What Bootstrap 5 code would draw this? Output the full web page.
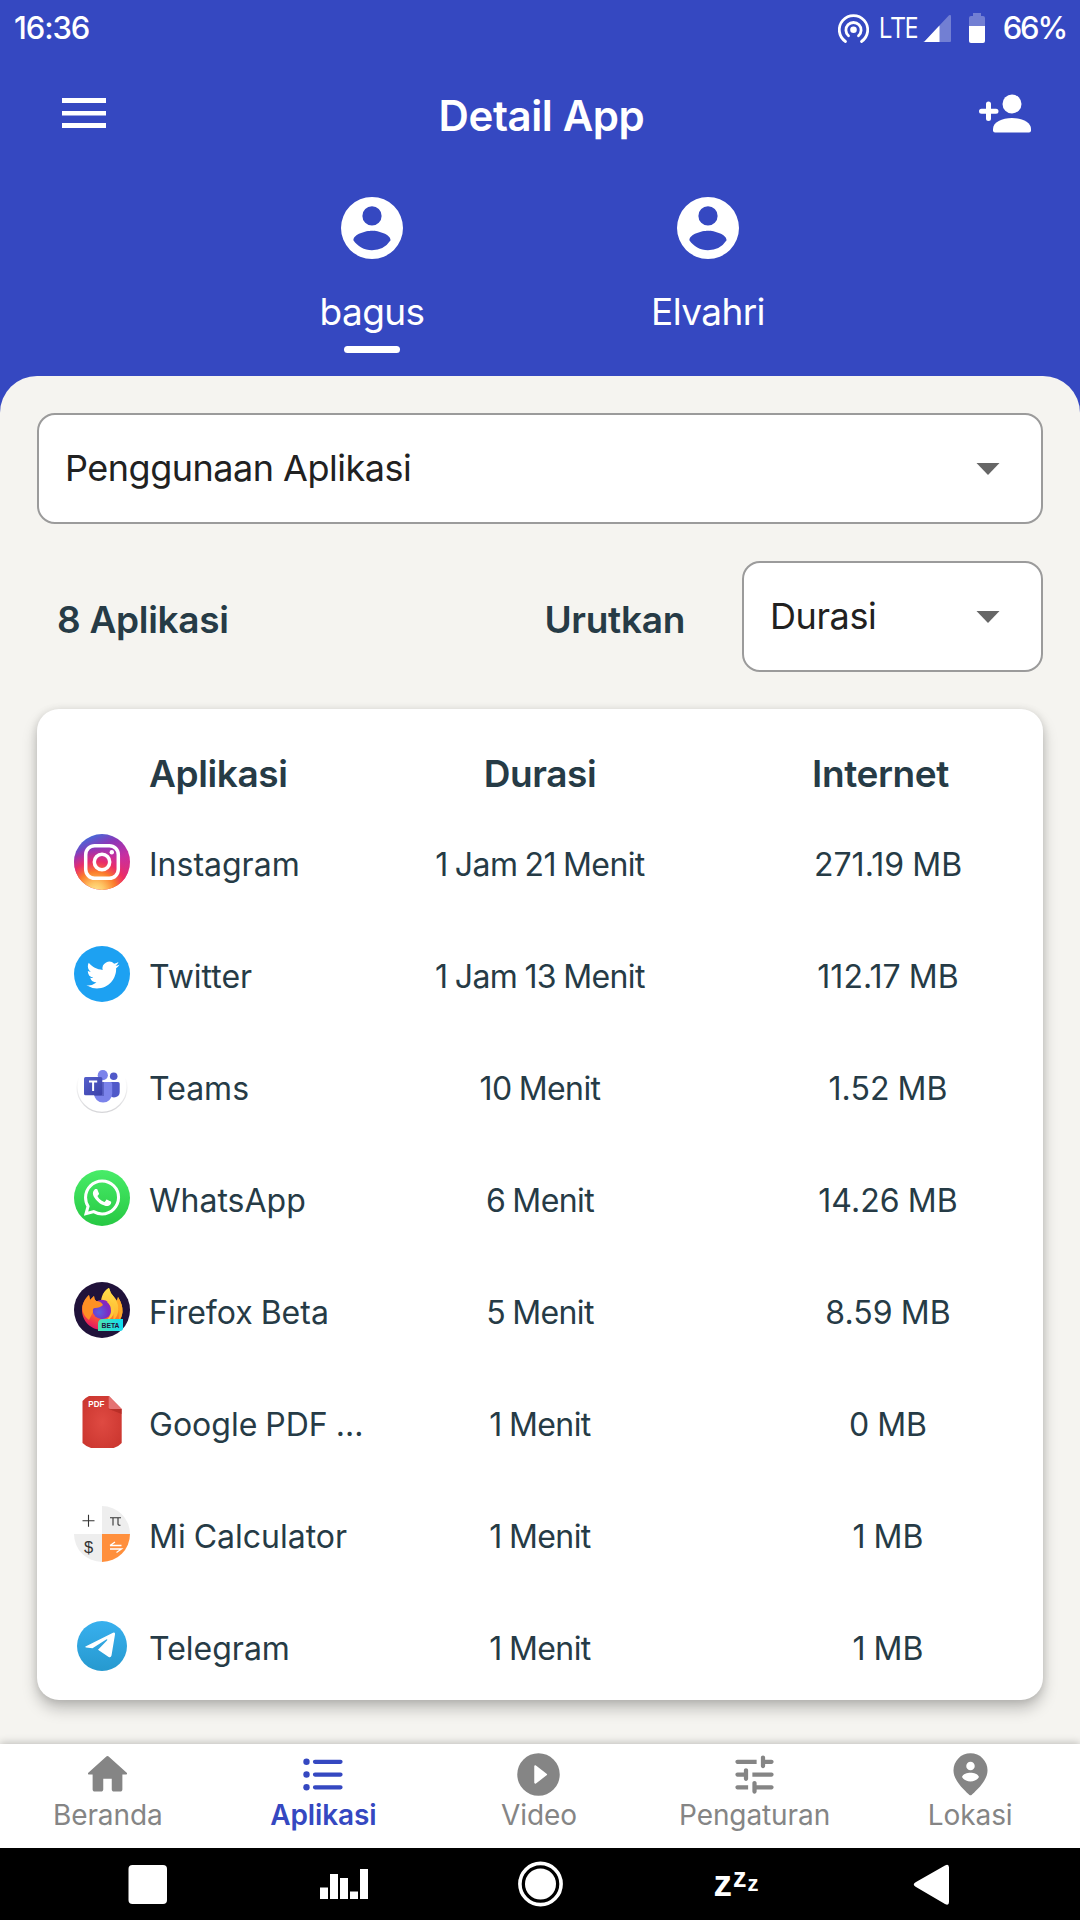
<!DOCTYPE html>
<html lang="id">
<head>
<meta charset="utf-8">
<meta name="viewport" content="width=device-width, initial-scale=1">
<title>Detail App</title>
<link href="https://cdn.jsdelivr.net/npm/bootstrap@5.3.0/dist/css/bootstrap.min.css" rel="stylesheet">
<style>
  :root { --brand: #3548c1; --ink: #263b46; --paper: #f5f4f0; --muted: #858585; }
  html, body { height: 100%; }
  body { background: var(--brand); color: var(--ink); font-family: Inter, "Open Sans", sans-serif; overflow: hidden; }
  svg { display: block; flex: none; }
  .screen { width: 1080px; height: 1920px; }
  .status-bar { height: 57px; padding: 0 14px 0 14px; font-size: 31px; font-weight: 500; letter-spacing: -1.1px; line-height: 56px; }
  .battery-text { margin-left: 12px; letter-spacing: -2.2px; }
  .app-bar { height: 115px; padding: 0 48px 0 62px; }
  .app-title { font-size: 42px; font-weight: 600; letter-spacing: -.4px; line-height: 50px; padding: 3px 4px 0 0; }
  .tabs { height: 204px; padding-top: 25px; }
  .tab { width: 336px; color: #fff; font-size: 37px; line-height: 44px; letter-spacing: -.6px; }
  .tab-name { margin-top: 31px; }
  .tab-bar { width: 56px; height: 7px; border-radius: 4px; background: #fff; margin-top: 12px; }
  .sheet { height: 1368px; background: var(--paper); border-radius: 37px 37px 0 0; padding: 37px 37px 0; }
  .picker { height: 111px; border: 2px solid #9b9b9b; border-radius: 18px; background: #fff; color: #212121; font-size: 36px; letter-spacing: -.5px; padding: 1px 41px 0 26px; line-height: 104px; }
  .picker span { margin-top: -2px; }
  .sort-row { height: 111px; margin: 37px 0; font-size: 37px; font-weight: 600; }
  .sort-row .picker { width: 301px; font-weight: 400; margin-left: 57px; letter-spacing: -.4px; }
  .sort-text { letter-spacing: -.3px; padding-top: 6px; }
  .app-card { height: 991px; border: 0; border-radius: 22px; box-shadow: 0 9px 15px rgba(0,0,0,.22), 0 1px 9px rgba(0,0,0,.12); }
  .head-row { flex: none; height: 97px; padding-top: 32px; font-size: 37px; font-weight: 600; letter-spacing: -.4px; }
  .app-row { flex: none; height: 112px; font-size: 32px; }
  .app-row .cell { padding-top: 6px; }
  .c-icon { width: 111px; padding-left: 37px; }
  .c-name { width: 252px; padding-left: 1px; }
  .c-time { width: 280px; }
  .c-data { width: 363px; padding-left: 53px; }
  .head-row .c-data { padding-left: 38px; }
  .app-row .c-name { word-spacing: -1px; white-space: nowrap; }
  .app-row .c-time { letter-spacing: -.6px; word-spacing: -1.2px; }
  .app-row .c-data { letter-spacing: .05px; word-spacing: -1px; }
  .bottom-nav { height: 104px; padding: 5px 2px 0 0; background: #fff; box-shadow: 0 -1px 8px rgba(0,0,0,.24); position: relative; }
  .bottom-nav a { color: var(--muted); font-size: 28px; line-height: 30px; letter-spacing: -.1px; text-decoration: none; }
  .bottom-nav a.active { color: var(--brand); font-weight: 600; }
  .system-bar { height: 72px; background: #000; padding: 0 50px 0 50px; }
  .pic-text { font-family: "Liberation Sans", sans-serif; letter-spacing: 0; }
</style>
</head>
<body>
<div class="screen d-flex flex-column">
  <header class="text-white">
    <div class="status-bar d-flex justify-content-between">
      <span>16:36</span>
      <div class="d-flex">
        <svg width="155" height="56" viewBox="0 0 155 56" fill="#fff">
          <g fill="none" stroke="#fff" stroke-width="2.8" stroke-linecap="round">
            <path d="M9.500 41.500A14.200 14.200 0 1 1 25.500 41.500"/><path d="M12.500 35.800A7.600 7.600 0 1 1 22.500 35.800"/>
          </g>
          <circle cx="17.500" cy="29.800" r="3.300"/>
          <text x="42.500" y="38" font-family="Open Sans" font-weight="400" font-size="30" textLength="39" lengthAdjust="spacingAndGlyphs">LTE</text>
          <path d="M88 42 113 15.300q2-1 2 1V41q0 1-1 1z" opacity=".3"/><path d="M88 42 103.500 25.500V42H89q-2 0-1-1z"/>
          <path d="M133 26V18q0-2 2-2h2v-3h8v3h2q2 0 2 2v8z" opacity=".3"/><path d="M133 26h16v15q0 2-2 2h-12q-2 0-2-2z"/>
        </svg>
        <span class="battery-text">66%</span>
      </div>
    </div>
    <div class="app-bar d-flex align-items-center justify-content-between">
      <svg width="46" height="44" viewBox="0 0 46 44" fill="#fff"><path d="M0 5h44v5H0zm0 13h44v4.500H0zm0 12h44v5H0z"/></svg>
      <div class="app-title">Detail App</div>
      <svg width="53" height="44" viewBox="0 0 53 44" fill="#fff">
        <circle cx="33" cy="11" r="9.500"/><path d="M14 36C14 29 23 25 33 25s19 4 19 11v1.500q0 2-2 2H16q-2 0-2-2z"/>
        <path d="M9.500 11v14.500M2.500 18.300h14.500" stroke="#fff" stroke-width="5" stroke-linecap="round"/>
      </svg>
    </div>
    <div class="tabs d-flex justify-content-center">
      <div class="tab d-flex flex-column align-items-center">
        <svg width="62" height="62" viewBox="2 2 20 20" fill="#fff"><path fill-rule="evenodd" d="M12 2a10 10 0 1 0 0 20 10 10 0 0 0 0-20zm0 3a3 3 0 1 1 0 6.200A3 3 0 0 1 12 5zm0 14.200c-2.500 0-4.710-1.280-6-3.220.03-1.990 4-3.080 6-3.080s5.970 1.090 6 3.080a7.200 7.200 0 0 1-6 3.220z"/></svg>
        <div class="tab-name">bagus</div><div class="tab-bar"></div>
      </div>
      <div class="tab d-flex flex-column align-items-center">
        <svg width="62" height="62" viewBox="2 2 20 20" fill="#fff"><path fill-rule="evenodd" d="M12 2a10 10 0 1 0 0 20 10 10 0 0 0 0-20zm0 3a3 3 0 1 1 0 6.200A3 3 0 0 1 12 5zm0 14.200c-2.500 0-4.710-1.280-6-3.220.03-1.990 4-3.080 6-3.080s5.970 1.090 6 3.080a7.200 7.200 0 0 1-6 3.220z"/></svg>
        <div class="tab-name">Elvahri</div>
      </div>
    </div>
  </header>

  <main class="sheet">
    <div class="picker d-flex align-items-center justify-content-between"><span>Penggunaan Aplikasi</span>
      <svg width="24" height="12" viewBox="0 0 24 12"><path d="M.5 0h23L12 12z" fill="#666"/></svg></div>
    <div class="sort-row d-flex align-items-center">
      <span class="sort-text me-auto ms-3 ps-1">8 Aplikasi</span>
      <span class="sort-text">Urutkan</span>
      <div class="picker d-flex align-items-center justify-content-between"><span>Durasi</span>
        <svg width="24" height="12" viewBox="0 0 24 12"><path d="M.5 0h23L12 12z" fill="#666"/></svg></div>
    </div>

    <section class="card app-card">
      <div class="head-row d-flex align-items-center">
        <div class="c-icon"></div><div class="c-name">Aplikasi</div><div class="c-time text-center">Durasi</div><div class="c-data text-center">Internet</div>
      </div>
      <div class="app-row d-flex align-items-center">
        <div class="c-icon"><svg width="56" height="56" viewBox="0 0 56 56">
          <defs>
            <linearGradient id="igBase" x1=".3" y1="0" x2=".75" y2="1"><stop offset="0" stop-color="#3f6fdc"/><stop offset=".25" stop-color="#8a37b8"/><stop offset=".55" stop-color="#c92fa0"/><stop offset="1" stop-color="#ee2c5a"/></linearGradient>
            <radialGradient id="igWarm" gradientUnits="userSpaceOnUse" cx="22" cy="58" r="45"><stop offset="0" stop-color="#ffe793"/><stop offset=".2" stop-color="#fec564"/><stop offset=".45" stop-color="#fb7d2b"/><stop offset=".68" stop-color="#ee2d63" stop-opacity=".9"/><stop offset="1" stop-color="#c92fa0" stop-opacity="0"/></radialGradient>
          </defs>
          <circle cx="28" cy="28" r="28" fill="url(#igBase)"/><circle cx="28" cy="28" r="28" fill="url(#igWarm)"/>
          <g fill="none" stroke="#fff" stroke-width="3.500"><rect x="11.700" y="11.700" width="32.600" height="32.600" rx="9"/><circle cx="28" cy="28" r="7.700"/></g><circle cx="37.800" cy="18.300" r="2.200" fill="#fff"/>
        </svg></div>
        <div class="cell c-name">Instagram</div><div class="cell c-time text-center">1 Jam 21 Menit</div><div class="cell c-data text-center">271.19 MB</div>
      </div>
      <div class="app-row d-flex align-items-center">
        <div class="c-icon"><svg width="56" height="56" viewBox="0 0 56 56"><circle cx="28" cy="28" r="28" fill="#1da1f2"/>
          <path transform="translate(12.500 12.500) scale(1.375)" fill="#fff" d="M23.953 4.570a10 10 0 01-2.825.775 4.958 4.958 0 002.163-2.723c-.951.555-2.005.959-3.127 1.184a4.920 4.920 0 00-8.384 4.482C7.690 8.095 4.067 6.130 1.640 3.162a4.822 4.822 0 00-.666 2.475c0 1.710.870 3.213 2.188 4.096a4.904 4.904 0 01-2.228-.616v.060a4.923 4.923 0 003.946 4.827 4.996 4.996 0 01-2.212.085 4.936 4.936 0 004.604 3.417 9.867 9.867 0 01-6.102 2.105c-.390 0-.779-.023-1.170-.067a13.995 13.995 0 007.557 2.209c9.053 0 13.998-7.496 13.998-13.985 0-.210 0-.420-.015-.630A9.935 9.935 0 0024 4.590z"/></svg></div>
        <div class="cell c-name">Twitter</div><div class="cell c-time text-center">1 Jam 13 Menit</div><div class="cell c-data text-center">112.17 MB</div>
      </div>
      <div class="app-row d-flex align-items-center">
        <div class="c-icon"><svg width="56" height="56" viewBox="0 0 56 56">
          <defs><linearGradient id="tmRim" x2="0" y2="1"><stop offset=".3" stop-color="#fff"/><stop offset="1" stop-color="#d5d5d8"/></linearGradient><linearGradient id="tmSq" x2="1" y2="1"><stop offset="0" stop-color="#5560cc"/><stop offset="1" stop-color="#3b40a8"/></linearGradient></defs>
          <circle cx="28" cy="29.300" r="25" fill="#fff" stroke="url(#tmRim)" stroke-width="1.200"/>
          <circle cx="39.700" cy="18.300" r="3.800" fill="#5059c9"/><path d="M36 24h8q1.700 0 1.700 1.700V34a5.500 5.500 0 0 1-9.700 3.500z" fill="#5059c9"/>
          <circle cx="28.800" cy="17.200" r="5.100" fill="#7b83eb"/><path d="M20 24h16.500q1.700 0 1.700 1.700V35.500a9.100 9.100 0 0 1-18.200 0z" fill="#7b83eb"/>
          <path d="M23.700 21.500H28v2.500h2v14H20.200V24z" fill="#4149a8" opacity=".55"/>
          <rect x="10" y="19" width="18.300" height="18.300" rx="1.500" fill="url(#tmSq)"/><path d="M15 23.500h8.200M19.100 23.500V33" stroke="#fff" stroke-width="2"/>
        </svg></div>
        <div class="cell c-name">Teams</div><div class="cell c-time text-center">10 Menit</div><div class="cell c-data text-center">1.52 MB</div>
      </div>
      <div class="app-row d-flex align-items-center">
        <div class="c-icon"><svg width="56" height="56" viewBox="0 0 56 56"><defs><linearGradient id="waBg" x2="0" y2="1"><stop offset="0" stop-color="#48ec68"/><stop offset="1" stop-color="#27c843"/></linearGradient></defs><circle cx="28" cy="28" r="28" fill="url(#waBg)"/>
          <path transform="translate(9.800 9.400) scale(1.515)" fill="#fff" d="M17.472 14.382c-.297-.149-1.758-.867-2.030-.967-.273-.099-.471-.148-.670.150-.197.297-.767.966-.940 1.164-.173.199-.347.223-.644.075-.297-.150-1.255-.463-2.390-1.475-.883-.788-1.480-1.761-1.653-2.059-.173-.297-.018-.458.130-.606.134-.133.298-.347.446-.520.149-.174.198-.298.298-.497.099-.198.050-.371-.025-.520-.075-.149-.669-1.612-.916-2.207-.242-.579-.487-.500-.669-.510-.173-.008-.371-.010-.570-.010-.198 0-.520.074-.792.372-.272.297-1.040 1.016-1.040 2.479 0 1.462 1.065 2.875 1.213 3.074.149.198 2.096 3.200 5.077 4.487.709.306 1.262.489 1.694.625.712.227 1.360.195 1.871.118.571-.085 1.758-.719 2.006-1.413.248-.694.248-1.289.173-1.413-.074-.124-.272-.198-.570-.347m-5.421 7.403h-.004a9.870 9.870 0 01-5.031-1.378l-.361-.214-3.741.982.998-3.648-.235-.374a9.860 9.860 0 01-1.510-5.260c.001-5.450 4.436-9.884 9.888-9.884 2.640 0 5.122 1.030 6.988 2.898a9.825 9.825 0 012.893 6.994c-.003 5.450-4.437 9.884-9.885 9.884m8.413-18.297A11.815 11.815 0 0012.050 0C5.495 0 .160 5.335.157 11.892c0 2.096.547 4.142 1.588 5.945L.057 24l6.305-1.654a11.882 11.882 0 005.683 1.448h.005c6.554 0 11.890-5.335 11.893-11.893a11.821 11.821 0 00-3.480-8.413z"/></svg></div>
        <div class="cell c-name">WhatsApp</div><div class="cell c-time text-center">6 Menit</div><div class="cell c-data text-center">14.26 MB</div>
      </div>
      <div class="app-row d-flex align-items-center">
        <div class="c-icon"><svg width="56" height="56" viewBox="0 0 56 56">
          <defs>
            <linearGradient id="ffBody" x1=".75" y1="0" x2=".3" y2="1"><stop offset="0" stop-color="#ffd83d"/><stop offset=".4" stop-color="#ff9a1f"/><stop offset=".7" stop-color="#ff5a30"/><stop offset="1" stop-color="#e0106a"/></linearGradient>
            <linearGradient id="ffTail" x2="0" y2="1"><stop offset="0" stop-color="#ffe04a"/><stop offset="1" stop-color="#ffb02e"/></linearGradient>
            <radialGradient id="ffGlobe" cx=".35" cy=".65" r=".8"><stop offset="0" stop-color="#5a5fe0"/><stop offset=".6" stop-color="#7a2cc4"/><stop offset="1" stop-color="#9b1fb4"/></radialGradient>
            <linearGradient id="ffTag"><stop offset="0" stop-color="#4fe3b0"/><stop offset="1" stop-color="#0fdcf2"/></linearGradient>
          </defs>
          <circle cx="28" cy="28" r="28" fill="#20123a"/>
          <path d="M8 28C8 22 10 18 15 13l1 5 4-4q0 3 2 5h8C27 13 31 8 35 6q1 5 5 9l3 4 1-4q5 8 4.500 15A20 20 0 0 1 28 48C17 48 8 39 8 28z" fill="url(#ffBody)"/>
          <path d="M27 19C28 12 31 8 35 6q1 5 5 9c6 7 6 18-1 24 2-9-1-19-12-20z" fill="url(#ffTail)"/>
          <path d="M40 15l3 4 1-4q5 8 4.500 15c-.3 4-2 7-4 10 2-9 1-18-4.500-25z" fill="#ffa828"/>
          <circle cx="28" cy="27.500" r="9.700" fill="url(#ffGlobe)"/>
          <path d="M8.500 24C10 19 12 16 15 13l1 5 4-4q0 3 2 5 5 0 7 4-3 3-8 3c-2 0-2.500 2-2 4l-4 8C10 34 8 30 8.500 24z" fill="#ff9024"/>
          <path d="M36 19q5 4 4 11-1 7-9 9 6-4 6-10 0-6-4-9z" fill="#ffc83a"/>
          <path d="M24 49v-7q0-5 5-5h20v9q0 3-3 3z" fill="url(#ffTag)"/>
          <text class="pic-text" x="27.500" y="45.700" font-size="7.200" font-weight="700" fill="#20123a" textLength="18" lengthAdjust="spacingAndGlyphs">BETA</text>
        </svg></div>
        <div class="cell c-name">Firefox Beta</div><div class="cell c-time text-center">5 Menit</div><div class="cell c-data text-center">8.59 MB</div>
      </div>
      <div class="app-row d-flex align-items-center">
        <div class="c-icon"><svg width="56" height="56" viewBox="0 0 56 56"><defs><radialGradient id="pdfBg" cx=".5" cy=".5" r=".6"><stop offset="0" stop-color="#df4a42"/><stop offset="1" stop-color="#cc3730"/></radialGradient></defs>
          <path d="M15 2h20l12.700 13v34q-3 3.500-8 5H17q-5-1.500-8.500-5V7q3-3.500 6.500-5z" fill="url(#pdfBg)"/><path d="M34.700 15h13v5z" fill="#a82620" opacity=".6"/><path d="M34.700 2l13 13H36.500q-1.800 0-1.800-1.800z" fill="#e57373"/>
          <text class="pic-text" x="14.300" y="12.500" font-size="8.400" font-weight="700" fill="#fff" textLength="16" lengthAdjust="spacingAndGlyphs">PDF</text></svg></div>
        <div class="cell c-name">Google PDF ...</div><div class="cell c-time text-center">1 Menit</div><div class="cell c-data text-center">0 MB</div>
      </div>
      <div class="app-row d-flex align-items-center">
        <div class="c-icon"><svg width="56" height="56" viewBox="0 0 56 56">
          <path d="M28 0a28 28 0 0 1 28 28H28zM0 28h28v28A28 28 0 0 1 0 28z" fill="#eee"/><path d="M28 28h28a28 28 0 0 1-28 28z" fill="#ff8f3c"/>
          <path d="M8.500 14.700h12M14.500 8.700v12M36 11.700h11M39 12v7.500M44 12v6q0 1.500 2.500 1.200" fill="none" stroke="#333" stroke-width="1.100"/>
          <text class="pic-text" x="14.500" y="46.500" font-size="16.500" text-anchor="middle" fill="#333">$</text>
          <path d="M36 39.500h11.500M36 39.500l5-3.500M36 43h11.500l-5 3.500" fill="none" stroke="#fff" stroke-width="1.300"/></svg></div>
        <div class="cell c-name">Mi Calculator</div><div class="cell c-time text-center">1 Menit</div><div class="cell c-data text-center">1 MB</div>
      </div>
      <div class="app-row d-flex align-items-center">
        <div class="c-icon"><svg width="56" height="56" viewBox="0 0 56 56"><defs><linearGradient id="tgBg" x2="0" y2="1"><stop offset="0" stop-color="#38b0ee"/><stop offset="1" stop-color="#2699cf"/></linearGradient></defs><circle cx="28" cy="28" r="25" fill="url(#tgBg)"/>
          <path d="M11.500 28.600 39 14.700q2.500-.8 2 1.800l-3.500 21q-.7 2.800-3.200 1.300L24 31.800l9.200-9.500q.5-1.500-1-.8L18.500 30.300l-6.500-.8q-1.300-.5-.5-.9z" fill="#fff"/></svg></div>
        <div class="cell c-name">Telegram</div><div class="cell c-time text-center">1 Menit</div><div class="cell c-data text-center">1 MB</div>
      </div>
    </section>
  </main>

  <nav class="bottom-nav d-flex">
    <a class="d-flex flex-column align-items-center flex-fill w-25" href="#"><svg width="51" height="51" viewBox="0 0 24 24" fill="currentColor"><path d="M10 19v-5h4v5c0 .55.45 1 1 1h3c.55 0 1-.45 1-1v-7h1.700c.46 0 .68-.57.33-.87L12.670 3.600c-.38-.34-.96-.34-1.340 0l-8.360 7.530c-.34.3-.13.87.33.87H5v7c0 .55.45 1 1 1h3c.55 0 1-.45 1-1z"/></svg>Beranda</a>
    <a class="active d-flex flex-column align-items-center flex-fill w-25" href="#"><svg width="51" height="51" viewBox="0 0 24 24" fill="currentColor"><circle cx="4" cy="6" r="1.500"/><circle cx="4" cy="12" r="1.500"/><circle cx="4" cy="18" r="1.500"/><path d="M8 6h12M8 12h12M8 18h12" stroke="currentColor" stroke-width="2" stroke-linecap="round"/></svg>Aplikasi</a>
    <a class="d-flex flex-column align-items-center flex-fill w-25" href="#"><svg width="51" height="51" viewBox="0 0 24 24" fill="currentColor"><path fill-rule="evenodd" d="M12 2a10 10 0 1 0 0 20 10 10 0 0 0 0-20zM10 8.200v7.600c0 .4.470.650.800.400l5-3.800a.5.5 0 0 0 0-.8l-5-3.800c-.33-.25-.8 0-.8.4z"/></svg>Video</a>
    <a class="d-flex flex-column align-items-center flex-fill w-25" href="#"><svg width="51" height="51" viewBox="0 0 24 24" fill="currentColor"><path d="M3 18c0 .55.45 1 1 1h5v-2H4c-.55 0-1 .45-1 1zM3 6c0 .55.45 1 1 1h9V5H4c-.55 0-1 .45-1 1zm10 14v-1h7c.55 0 1-.45 1-1s-.45-1-1-1h-7v-1c0-.55-.45-1-1-1s-1 .45-1 1v4c0 .55.45 1 1 1s1-.45 1-1zM7 10v1H4c-.55 0-1 .45-1 1s.45 1 1 1h3v1c0 .55.45 1 1 1s1-.45 1-1v-4c0-.55-.45-1-1-1s-1 .45-1 1zm14 2c0-.55-.45-1-1-1h-9v2h9c.55 0 1-.45 1-1zm-5-3c.55 0 1-.45 1-1V7h3c.55 0 1-.45 1-1s-.45-1-1-1h-3V4c0-.55-.45-1-1-1s-1 .45-1 1v4c0 .55.45 1 1 1z"/></svg>Pengaturan</a>
    <a class="d-flex flex-column align-items-center flex-fill w-25" href="#"><svg width="51" height="51" viewBox="0 0 24 24" fill="currentColor"><path fill-rule="evenodd" d="M12 2a8 8 0 0 0-8 8.200c0 5 6.300 10.300 7.500 11.400q.5.400 1 0C13.700 20.500 20 15.200 20 10.200A8 8 0 0 0 12 2zm0 4a2 2 0 1 1 0 4 2 2 0 0 1 0-4zm0 9.300c-1.700 0-3.200-.8-4-2.100.5-1.400 2.400-2 4-2s3.500.6 4 2c-.8 1.300-2.300 2.100-4 2.100z"/></svg>Lokasi</a>
  </nav>

  <div class="system-bar d-flex align-items-center justify-content-around">
    <svg width="48" height="48" viewBox="0 0 48 48" fill="#fff"><rect x="4.500" y="5" width="38.500" height="39" rx="4"/></svg>
    <svg width="48" height="48" viewBox="0 0 48 48" fill="#fff"><path d="M0 27.500h8V39H0zM10 14h8v25h-8zM20 18h8v21h-8zM30 31.500h8V39h-8zM40 9h8v30h-8z"/></svg>
    <svg width="48" height="48" viewBox="0 0 48 48"><circle cx="24.500" cy="24" r="20.600" fill="none" stroke="#fff" stroke-width="3.600"/><circle cx="24.500" cy="24" r="15.500" fill="#fff"/></svg>
    <svg width="48" height="48" viewBox="0 0 48 48" fill="#fff" class="pic-text" font-weight="700"><text x="1.500" y="36" font-size="37">z</text><text x="21" y="27" font-size="27">z</text><text x="35.500" y="31" font-size="22">z</text></svg>
    <svg width="48" height="48" viewBox="0 0 48 48" fill="#fff"><path d="M37 5.500q4-2 4 2V42q0 4-4 2L8 27q-4.500-2.500 0-5z"/></svg>
  </div>
</div>
<script src="https://cdn.jsdelivr.net/npm/bootstrap@5.3.0/dist/js/bootstrap.bundle.min.js"></script>
</body>
</html>
